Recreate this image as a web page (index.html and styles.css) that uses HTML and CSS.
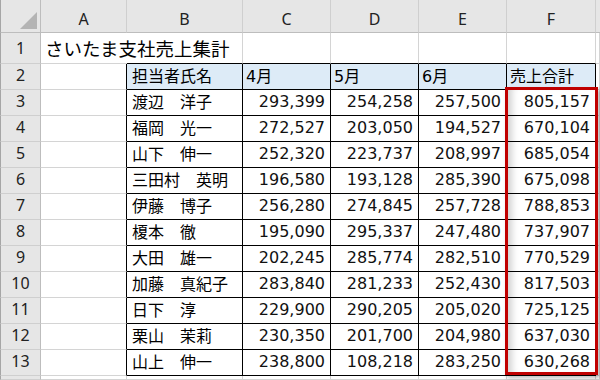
FILE: index.html
```html
<!DOCTYPE html>
<html lang="ja">
<head>
<meta charset="utf-8">
<link rel="stylesheet" href="styles.css">
</head>
<body>
<div class="sheet">
  <div class="corner"><span class="tri"></span></div>
  <div class="ch">A</div><div class="ch">B</div><div class="ch">C</div><div class="ch">D</div><div class="ch">E</div><div class="ch">F</div><div class="ch last"></div>

  <div class="rh r1">1</div>
  <div class="c title">さいたま支社売上集計</div><div class="c above"></div><div class="c above"></div><div class="c above"></div><div class="c above"></div><div class="c above"></div><div class="c"></div>

  <div class="rh">2</div>
  <div class="c edge"></div><div class="c t hd name">担当者氏名</div><div class="c t hd">4月</div><div class="c t hd">5月</div><div class="c t hd">6月</div><div class="c t hd">売上合計</div><div class="c"></div>

  <div class="rh">3</div>
  <div class="c edge"></div><div class="c t name">渡辺　洋子</div><div class="c t num">293,399</div><div class="c t num">254,258</div><div class="c t num">257,500</div><div class="c t num">805,157</div><div class="c"></div>

  <div class="rh">4</div>
  <div class="c edge"></div><div class="c t name">福岡　光一</div><div class="c t num">272,527</div><div class="c t num">203,050</div><div class="c t num">194,527</div><div class="c t num">670,104</div><div class="c"></div>

  <div class="rh">5</div>
  <div class="c edge"></div><div class="c t name">山下　伸一</div><div class="c t num">252,320</div><div class="c t num">223,737</div><div class="c t num">208,997</div><div class="c t num">685,054</div><div class="c"></div>

  <div class="rh">6</div>
  <div class="c edge"></div><div class="c t name">三田村　英明</div><div class="c t num">196,580</div><div class="c t num">193,128</div><div class="c t num">285,390</div><div class="c t num">675,098</div><div class="c"></div>

  <div class="rh">7</div>
  <div class="c edge"></div><div class="c t name">伊藤　博子</div><div class="c t num">256,280</div><div class="c t num">274,845</div><div class="c t num">257,728</div><div class="c t num">788,853</div><div class="c"></div>

  <div class="rh">8</div>
  <div class="c edge"></div><div class="c t name">榎本　徹</div><div class="c t num">195,090</div><div class="c t num">295,337</div><div class="c t num">247,480</div><div class="c t num">737,907</div><div class="c"></div>

  <div class="rh">9</div>
  <div class="c edge"></div><div class="c t name">大田　雄一</div><div class="c t num">202,245</div><div class="c t num">285,774</div><div class="c t num">282,510</div><div class="c t num">770,529</div><div class="c"></div>

  <div class="rh">10</div>
  <div class="c edge"></div><div class="c t name">加藤　真紀子</div><div class="c t num">283,840</div><div class="c t num">281,233</div><div class="c t num">252,430</div><div class="c t num">817,503</div><div class="c"></div>

  <div class="rh">11</div>
  <div class="c edge"></div><div class="c t name">日下　淳</div><div class="c t num">229,900</div><div class="c t num">290,205</div><div class="c t num">205,020</div><div class="c t num">725,125</div><div class="c"></div>

  <div class="rh">12</div>
  <div class="c edge"></div><div class="c t name">栗山　茉莉</div><div class="c t num">230,350</div><div class="c t num">201,700</div><div class="c t num">204,980</div><div class="c t num">637,030</div><div class="c"></div>

  <div class="rh">13</div>
  <div class="c edge"></div><div class="c t name">山上　伸一</div><div class="c t num">238,800</div><div class="c t num">108,218</div><div class="c t num">283,250</div><div class="c t num">630,268</div><div class="c"></div>

  <div class="rh"></div>
  <div class="c"></div><div class="c"></div><div class="c"></div><div class="c"></div><div class="c"></div><div class="c"></div><div class="c"></div>

  <div class="selection"></div>
</div>
</body>
</html>
```

FILE: styles.css
```css
html, body {
  margin: 0;
  padding: 0;
  background: #ffffff;
}

.sheet {
  position: relative;
  width: 600px;
  height: 380px;
  overflow: hidden;
  display: grid;
  grid-template-columns: 41px 86px 116px 88px 88px 88px 89px 1fr;
  grid-template-rows: 33px 31px repeat(12, 26px) 1fr;
  font-family: "Noto Sans CJK JP", sans-serif;
  color: #000;
  background: #fff;
}

.sheet > div {
  box-sizing: border-box;
  min-width: 0;
}

.corner {
  background: #e6e6e6;
  border-left: 1px solid #a6a6a6;
  border-right: 1px solid #bdbdbd;
  border-bottom: 1px solid #bdbdbd;
  display: flex;
  justify-content: flex-end;
  align-items: flex-end;
  padding: 0 3px 3px 0;
}

.tri {
  width: 17px;
  height: 17px;
  background: #b4b4b4;
  clip-path: polygon(100% 0, 100% 100%, 0 100%);
}

.ch {
  background: #e6e6e6;
  border-right: 1px solid #cfcfcf;
  border-bottom: 1px solid #bdbdbd;
  display: flex;
  justify-content: center;
  align-items: center;
  padding-top: 6px;
  font-family: "Noto Sans", sans-serif;
  font-size: 16px;
  color: #222;
}

.ch.last {
  border-right: none;
}

.rh {
  background: #e6e6e6;
  border-left: 1px solid #a6a6a6;
  border-right: 1px solid #bdbdbd;
  border-bottom: 1px solid #cfcfcf;
  display: flex;
  justify-content: center;
  align-items: center;
  padding-bottom: 3px;
  font-family: "Noto Sans", sans-serif;
  font-size: 16px;
  color: #222;
}

.rh.r1 {
  padding-bottom: 0;
}

.c {
  border-right: 1px solid #d4d4d4;
  border-bottom: 1px solid #d4d4d4;
  display: flex;
  align-items: center;
  padding-bottom: 3px;
  font-size: 16px;
  white-space: nowrap;
}

.title {
  border-right: none;
  overflow: visible;
  padding: 0 0 0 4px;
  font-size: 18.5px;
}

.above {
  border-bottom-color: #000;
  background: transparent;
}

.edge {
  border-right-color: #000;
}

.t {
  border-right-color: #000;
  border-bottom-color: #000;
  padding-left: 3px;
}

.hd {
  background: #ddebf7;
  font-family: "DejaVu Sans", "Noto Sans CJK JP", sans-serif;
  font-size: 16px;
}

.hd.name {
  font-family: "Noto Sans CJK JP", sans-serif;
}

.name {
  padding-left: 5px;
}

.num {
  justify-content: flex-end;
  padding-right: 5px;
  font-family: "DejaVu Sans", sans-serif;
  font-size: 16px;
  color: #111;
}

.selection {
  position: absolute;
  left: 505px;
  top: 87px;
  width: 93px;
  height: 288px;
  border: 3px solid #c00000;
  box-shadow: 2px 3px 4px rgba(0, 0, 0, 0.28), inset 9px 0 7px -5px rgba(0, 0, 0, 0.18);
  pointer-events: none;
}
```
